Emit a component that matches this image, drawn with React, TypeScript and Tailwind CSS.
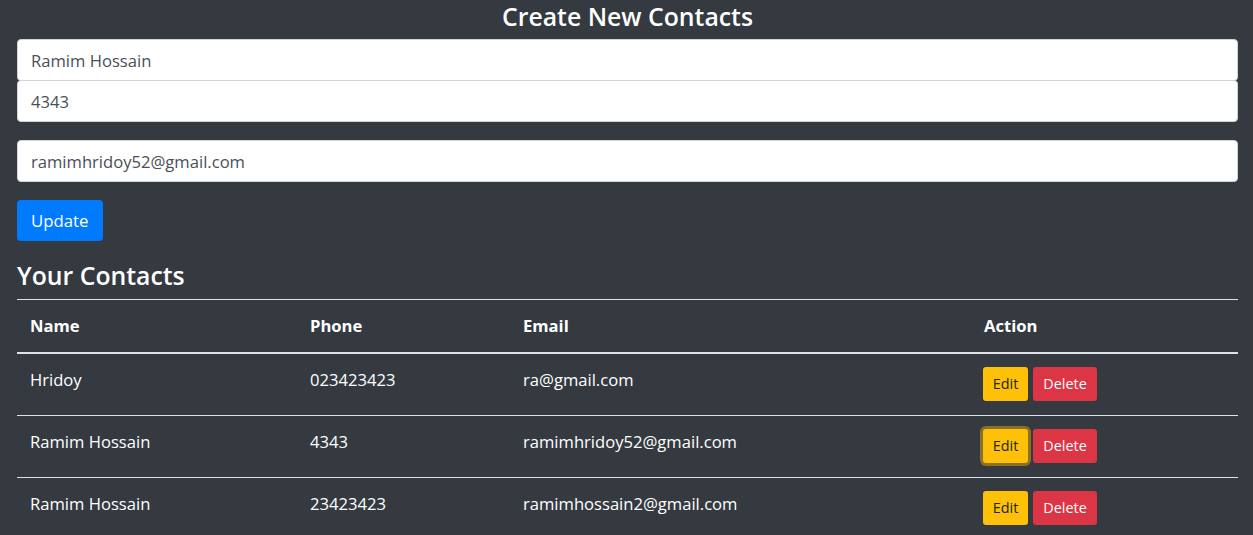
import { FC } from "react";

interface Contact {
  name: string;
  phone: string;
  email: string;
  focused?: boolean;
}

const contacts: Contact[] = [
  { name: "Hridoy", phone: "023423423", email: "ra@gmail.com" },
  { name: "Ramim Hossain", phone: "4343", email: "ramimhridoy52@gmail.com", focused: true },
  { name: "Ramim Hossain", phone: "23423423", email: "ramimhossain2@gmail.com" },
];

const Field: FC<{ value: string; className?: string }> = ({ value, className }) => {
  return (
    <input
      readOnly
      value={value}
      className={`block w-full h-[42px] bg-white border border-[#ced4da] rounded-[4px] px-[13px] text-[16.6px] text-[#495057] outline-none ${className ?? ""}`}
    />
  );
};

const App: FC = () => {
  return (
    <div
      className="min-h-[535px] bg-[#343a40] pl-[17px] pr-[15px] text-white"
      style={{ fontFamily: '"Open Sans", "Noto Sans", sans-serif' }}
    >
      <h4 className="text-center text-[24.8px] font-semibold leading-[32px] mb-[7px]">
        Create New Contacts
      </h4>
      <form>
        <Field value="Ramim Hossain" />
        <Field value="4343" className="-mt-px" />
        <Field value="ramimhridoy52@gmail.com" className="mt-[18px]" />
        <button
          type="button"
          className="mt-[18px] h-[41px] px-[14px] rounded-[4px] bg-[#007bff] text-white text-[16.8px] leading-[26px]"
        >
          Update
        </button>
      </form>

      <h4 className="mt-[18px] text-[24.8px] font-semibold leading-[32px] mb-[8px]">
        Your Contacts
      </h4>
      <table className="w-full table-fixed border-collapse text-[16.6px] leading-[26px]">
        <colgroup>
          <col className="w-[280px]" />
          <col className="w-[213px]" />
          <col className="w-[461px]" />
          <col />
        </colgroup>
        <thead>
          <tr className="border-t border-[#dee2e6]">
            <th className="text-left font-bold px-[13px] py-[13px] border-b-2 border-[#dee2e6]">Name</th>
            <th className="text-left font-bold px-[13px] py-[13px] border-b-2 border-[#dee2e6]">Phone</th>
            <th className="text-left font-bold px-[13px] py-[13px] border-b-2 border-[#dee2e6]">Email</th>
            <th className="text-left font-bold px-[13px] py-[13px] border-b-2 border-[#dee2e6]">Action</th>
          </tr>
        </thead>
        <tbody>
          {contacts.map((c, i) => (
            <tr key={i} className={i > 0 ? "border-t border-[#dee2e6]" : ""}>
              <td className="align-top px-[13px] py-[13px]">{c.name}</td>
              <td className="align-top px-[13px] py-[13px]">{c.phone}</td>
              <td className="align-top px-[13px] py-[13px]">{c.email}</td>
              <td className="align-top px-[12px] pt-[13px] pb-[14px]">
                <div className="flex gap-[5px]">
                  <button
                    type="button"
                    className={`h-[34px] w-[45px] rounded-[3px] bg-[#ffc107] text-[#212529] text-[14.4px] ${
                      c.focused ? "shadow-[0_0_0_3px_rgba(222,170,12,0.5)]" : ""
                    }`}
                  >
                    Edit
                  </button>
                  <button
                    type="button"
                    className="h-[34px] w-[64px] rounded-[3px] bg-[#dc3545] text-white text-[14.4px]"
                  >
                    Delete
                  </button>
                </div>
              </td>
            </tr>
          ))}
        </tbody>
      </table>
    </div>
  );
};

export default App;
